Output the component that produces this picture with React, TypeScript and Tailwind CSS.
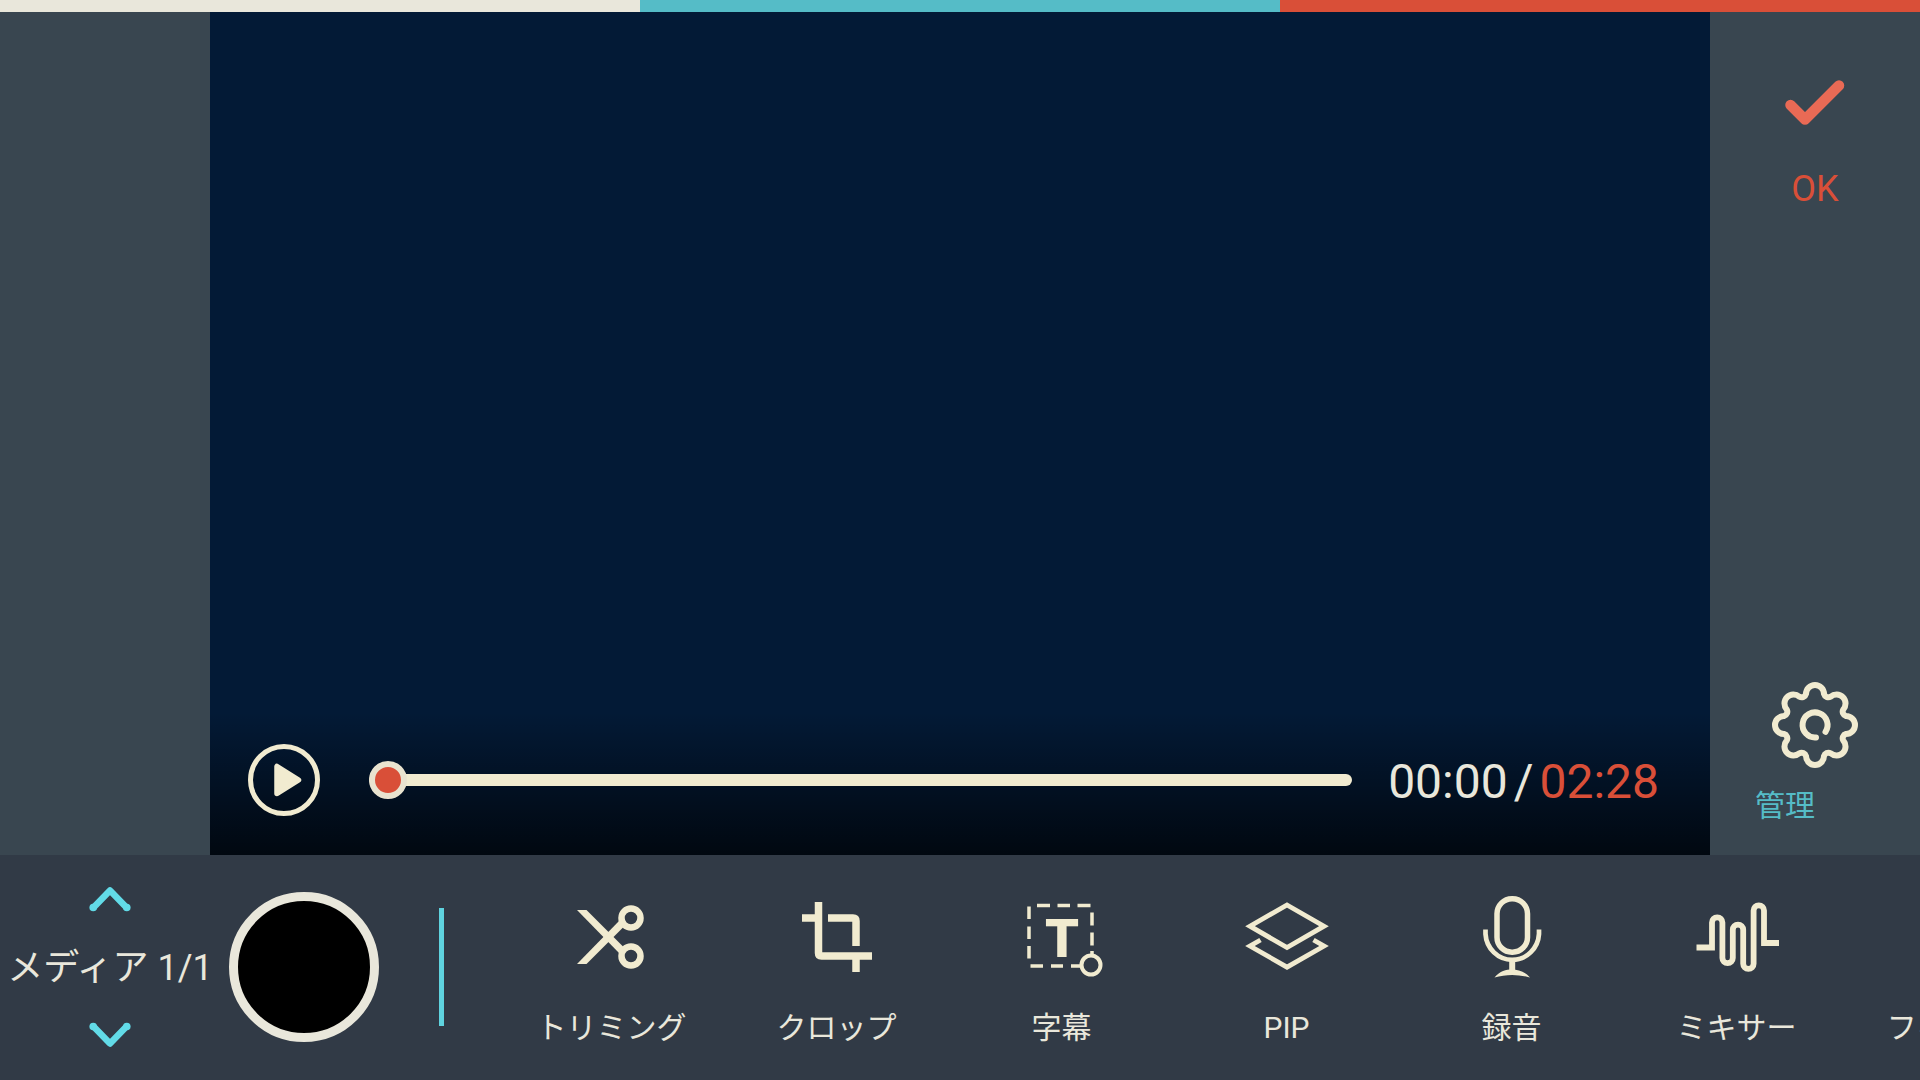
import { useState } from 'react'
import type { ReactNode } from 'react'

const ScissorsIcon = () => (
  <svg viewBox="0 0 84 84" className="size-[84px]" fill="none" aria-hidden="true">
    <path d="M7 15H16.5L55 53.5L50 59Z" fill="currentColor" />
    <path d="M7 69H16.5L55 30.5L50 25Z" fill="currentColor" />
    <circle cx="61" cy="23" r="9.5" stroke="currentColor" strokeWidth="6.5" />
    <circle cx="61" cy="61" r="9.5" stroke="currentColor" strokeWidth="6.5" />
  </svg>
)

const CropIcon = () => (
  <svg viewBox="0 0 84 84" className="size-[84px]" fill="none" stroke="currentColor" strokeWidth="7.5" aria-hidden="true">
    <path d="M23.5 7V58q0 3 3 3H77" />
    <path d="M7 23H22M33 23H58q3 0 3 3V51M61 61V77" />
  </svg>
)

const SubtitleIcon = () => (
  <svg viewBox="0 0 84 84" className="size-[84px]" fill="none" stroke="currentColor" aria-hidden="true">
    <path
      d="M17 10.5H30M37.5 10.5H50M57.5 10.5H70.5M10.5 71H23M31 71H43M51 71H60M9 11.5V24M9 31.5V44M9 51V63.5M72 17.5V30.5M72 37.5V50.5M72 56V60"
      strokeWidth="3.5"
    />
    <circle cx="71" cy="70" r="9.5" strokeWidth="4" />
    <text x="42" y="62" textAnchor="middle" fontSize="54" fontWeight="900" fill="currentColor" stroke="none">
      T
    </text>
  </svg>
)

const LayersIcon = () => (
  <svg viewBox="0 0 84 84" className="size-[84px]" fill="none" stroke="currentColor" strokeWidth="4.8" aria-hidden="true">
    <path d="M42 10L79 31.2L42 52.5L5 31.2Z" />
    <path d="M15.5 45L5 51L42 72.2L79 51L68.5 45" />
  </svg>
)

const MicIcon = () => (
  <svg viewBox="0 0 84 84" className="size-[84px]" fill="none" stroke="currentColor" aria-hidden="true">
    <rect x="27" y="3.7" width="30.5" height="53.5" rx="15" strokeWidth="5.5" />
    <path d="M15.5 34.5V39A26.8 27.5 0 0 0 69 39V34.5" strokeWidth="4.7" />
    <path d="M42.2 66V77" strokeWidth="6" />
    <path d="M24.5 82.500C30 76 36 74.500 42 74.500S54 76 60 82.500C48 79 36 79 24.500 82.500Z" fill="currentColor" stroke="none" />
  </svg>
)

const MixerIcon = () => (
  <svg viewBox="0 0 84 84" className="size-[84px]" fill="none" stroke="currentColor" strokeWidth="5.8" aria-hidden="true">
    <path d="M1.5 52.5H17V27.5a5.2 5.2 0 0 1 10.4 0V63a5.2 5.2 0 0 0 10.4 0V34.8a5.2 5.2 0 0 1 10.4 0V68.7a5.2 5.2 0 0 0 10.4 0V15.5a5.2 5.2 0 0 1 10.4 0V48H84" />
  </svg>
)

const GearIcon = () => (
  <svg viewBox="-43 -43 86 86" className="size-[86px]" fill="none" stroke="currentColor" aria-hidden="true">
    <path
      d="M-9-31A9 9 0 0 1 9-31A4.5 4.5 0 0 0 15.6-28.3A9 9 0 0 1 28.3-15.6A4.5 4.5 0 0 0 31-9A9 9 0 0 1 31 9A4.5 4.5 0 0 0 28.3 15.6A9 9 0 0 1 15.6 28.3A4.5 4.5 0 0 0 9 31A9 9 0 0 1-9 31A4.5 4.5 0 0 0-15.6 28.3A9 9 0 0 1-28.3 15.6A4.5 4.5 0 0 0-31 9A9 9 0 0 1-31-9A4.5 4.5 0 0 0-28.3-15.6A9 9 0 0 1-15.6-28.3A4.5 4.5 0 0 0-9-31Z"
      strokeWidth="6"
    />
    <path d="M1 12.4A12.5 12.5 0 1 1 10.5 6.8" strokeWidth="6" strokeLinecap="round" />
  </svg>
)

const CheckIcon = () => (
  <svg viewBox="0 0 60 46" className="h-[46px] w-[60px]" fill="none" aria-hidden="true">
    <path d="M5.5 25L20 39.5L54 5.5" stroke="currentColor" strokeWidth="10.5" strokeLinecap="round" strokeLinejoin="round" />
  </svg>
)

const ChevronIcon = ({ down = false }: { down?: boolean }) => (
  <svg viewBox="0 0 42 26" className={down ? 'h-[26px] w-[42px] rotate-180' : 'h-[26px] w-[42px]'} fill="none" aria-hidden="true">
    <path d="M4.5 21.5L21 4.5L37.5 21.5" stroke="currentColor" strokeWidth="6.6" strokeLinecap="round" strokeLinejoin="round" />
    <circle cx="4.2" cy="21.5" r="3.8" fill="currentColor" />
    <circle cx="37.8" cy="21.5" r="3.8" fill="currentColor" />
  </svg>
)

const PlayIcon = () => (
  <svg viewBox="0 0 72 72" className="size-[72px]" fill="none" stroke="currentColor" aria-hidden="true">
    <circle cx="36" cy="36" r="33.5" strokeWidth="5" />
    <path d="M29 22.5V49.5L50.5 36Z" fill="currentColor" strokeWidth="5.5" strokeLinejoin="round" />
  </svg>
)

const tools: { label: string; icon: ReactNode }[] = [
  { label: 'トリミング', icon: <ScissorsIcon /> },
  { label: 'クロップ', icon: <CropIcon /> },
  { label: '字幕', icon: <SubtitleIcon /> },
  { label: 'PIP', icon: <LayersIcon /> },
  { label: '録音', icon: <MicIcon /> },
  { label: 'ミキサー', icon: <MixerIcon /> },
  { label: 'フィルター', icon: null },
]

const Player = () => {
  const [position, setPosition] = useState(0)

  return (
    <section className="flex min-w-0 flex-1 flex-col justify-end bg-[#031a36]">
      <div className="flex items-center bg-linear-to-b from-transparent to-black/70 pt-8 pr-[51px] pb-[39px] pl-[38px]">
        <button type="button" aria-label="再生" className="shrink-0 text-[#f1ebd0]">
          <PlayIcon />
        </button>
        <input
          type="range"
          aria-label="再生位置"
          min={0}
          max={148}
          value={position}
          onChange={e => setPosition(Number(e.target.value))}
          className="ml-[49px] h-10 min-w-0 flex-1 appearance-none bg-transparent [&::-webkit-slider-runnable-track]:h-3 [&::-webkit-slider-runnable-track]:rounded-full [&::-webkit-slider-runnable-track]:bg-[#f1ebd0] [&::-webkit-slider-thumb]:-mt-[13px] [&::-webkit-slider-thumb]:size-[38px] [&::-webkit-slider-thumb]:appearance-none [&::-webkit-slider-thumb]:rounded-full [&::-webkit-slider-thumb]:border-6 [&::-webkit-slider-thumb]:border-[#e9e3cf] [&::-webkit-slider-thumb]:bg-[#d94f38]"
        />
        <div className="ml-9 flex shrink-0 gap-1.5 pt-1 text-[48px] leading-[56px] text-[#e9e7db]">
          <span>00:00</span>
          <span>/</span>
          <span className="text-[#d94f38]">02:28</span>
        </div>
      </div>
    </section>
  )
}

export default function App() {
  return (
    <div className="flex min-h-screen flex-col overflow-hidden bg-[#394650] font-['Roboto','Noto_Sans_CJK_JP',sans-serif]">
      <div className="flex h-3 shrink-0">
        <div className="flex-1 bg-[#e9e7db]" />
        <div className="flex-1 bg-[#55bcc7]" />
        <div className="flex-1 bg-[#d94f38]" />
      </div>

      <main className="flex flex-1">
        <div className="w-[210px] shrink-0" />
        <Player />
        <aside className="flex w-[210px] shrink-0 flex-col justify-between pt-[68px] pb-[27px]">
          <button type="button" className="flex flex-col items-center gap-[41px] text-[#e96a55]">
            <CheckIcon />
            <span className="text-[36px] leading-[44px] text-[#d94f38]">OK</span>
          </button>
          <button type="button" className="flex flex-col items-center gap-4 text-[#f1ebd0]">
            <GearIcon />
            <span className="ml-[45px] self-start text-[30px] leading-[44px] text-[#55bcc7]">管理</span>
          </button>
        </aside>
      </main>

      <footer className="flex h-[225px] shrink-0 items-center overflow-hidden bg-[#313a46] pb-0.5 text-[#e9e7db]">
        <div className="flex w-[220px] shrink-0 flex-col items-center gap-8">
          <button type="button" aria-label="前のメディア" className="text-[#62dbe8]">
            <ChevronIcon />
          </button>
          <span className="pt-0.5 text-[36px] leading-[44px] whitespace-nowrap">メディア 1/1</span>
          <button type="button" aria-label="次のメディア" className="text-[#62dbe8]">
            <ChevronIcon down />
          </button>
        </div>
        <button
          type="button"
          aria-label="メディア 1"
          className="ml-[9px] size-[150px] shrink-0 rounded-full border-[9px] border-[#e9e7db] bg-black"
        />
        <div className="ml-[60px] h-[118px] w-[5px] shrink-0 bg-[#5fd3df]" />
        <nav className="ml-[55px] flex min-w-0 flex-1 overflow-hidden pt-3">
          {tools.map(tool => (
            <button key={tool.label} type="button" className="flex w-[225px] shrink-0 flex-col items-center gap-[27px]">
              <span className="size-[84px] text-[#f1ebd0]">{tool.icon}</span>
              <span className="text-[30px] leading-[44px] whitespace-nowrap">{tool.label}</span>
            </button>
          ))}
        </nav>
      </footer>
    </div>
  )
}
